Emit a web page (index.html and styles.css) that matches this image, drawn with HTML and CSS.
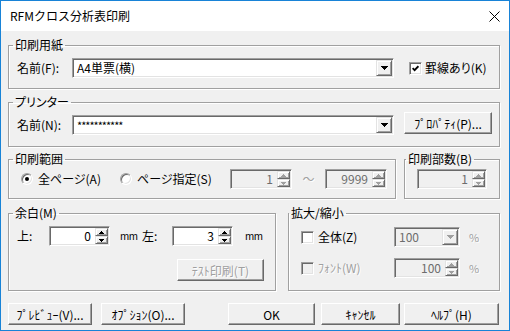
FILE: index.html
```html
<!DOCTYPE html>
<html lang="ja">
<head>
	<meta charset="UTF-8">
	<title>RFMクロス分析表印刷</title>
	<link rel="stylesheet" href="styles.css">
</head>
<body>
	<div class="window">
		<div class="titlebar">
			<span class="title">RFMクロス分析表印刷</span>
			<svg class="close" width="11" height="11" viewBox="0 0 11 11"><path d="M0.5 0.5 L10.5 10.5 M10.5 0.5 L0.5 10.5" stroke="#000" stroke-width="1"/></svg>
		</div>

		<div class="client">
			<!-- paper -->
			<fieldset class="group paper">
				<legend>印刷用紙</legend>
				<div class="row">
					<span class="lbl">名前(F):</span>
					<div class="combo name-combo">
						<span class="combo-text">A4単票(横)</span>
						<span class="drop"><svg width="7" height="4" shape-rendering="crispEdges"><polygon points="0,0 7,0 3.5,4" fill="#000"/></svg></span>
					</div>
					<span class="check rule-check"><svg width="7" height="7" viewBox="0 0 7 7"><path d="M0.6 3.2 L2.6 5.2 L6.4 1.2" stroke="#000" stroke-width="1.8" fill="none"/></svg></span>
					<span class="check-text">罫線あり(K)</span>
				</div>
			</fieldset>

			<!-- printer -->
			<fieldset class="group printer">
				<legend>プリンター</legend>
				<div class="row">
					<span class="lbl">名前(N):</span>
					<div class="combo name-combo">
						<span class="combo-text stars">***********</span>
						<span class="drop"><svg width="7" height="4" shape-rendering="crispEdges"><polygon points="0,0 7,0 3.5,4" fill="#000"/></svg></span>
					</div>
					<button class="btn prop-btn">ﾌﾟﾛﾊﾟﾃｨ(P)...</button>
				</div>
			</fieldset>

			<div class="group-row range-row">
				<fieldset class="group range">
					<legend>印刷範囲</legend>
					<div class="row range-line">
						<span class="opt opt-all"><span class="radio on"></span><span>全ページ(A)</span></span>
						<span class="opt opt-page"><span class="radio"></span><span>ページ指定(S)</span></span>
						<div class="spin page-spin off">
							<span class="spin-text">1</span>
							<span class="updown">
								<span class="ud-btn"><svg width="5" height="3" shape-rendering="crispEdges"><polygon points="0,3 5,3 2.5,0" fill="#a0a0a0"/></svg></span>
								<span class="ud-btn"><svg width="5" height="3" shape-rendering="crispEdges"><polygon points="0,0 5,0 2.5,3" fill="#a0a0a0"/></svg></span>
							</span>
						</div>
						<span class="tilde dis">～</span>
						<div class="spin page-spin off">
							<span class="spin-text">9999</span>
							<span class="updown">
								<span class="ud-btn"><svg width="5" height="3" shape-rendering="crispEdges"><polygon points="0,3 5,3 2.5,0" fill="#a0a0a0"/></svg></span>
								<span class="ud-btn"><svg width="5" height="3" shape-rendering="crispEdges"><polygon points="0,0 5,0 2.5,3" fill="#a0a0a0"/></svg></span>
							</span>
						</div>
					</div>
				</fieldset>

				<fieldset class="group copies">
					<legend>印刷部数(B)</legend>
					<div class="row">
						<div class="spin copies-spin off">
							<span class="spin-text">1</span>
							<span class="updown">
								<span class="ud-btn"><svg width="5" height="3" shape-rendering="crispEdges"><polygon points="0,3 5,3 2.5,0" fill="#a0a0a0"/></svg></span>
								<span class="ud-btn"><svg width="5" height="3" shape-rendering="crispEdges"><polygon points="0,0 5,0 2.5,3" fill="#a0a0a0"/></svg></span>
							</span>
						</div>
					</div>
				</fieldset>
			</div>

			<div class="group-row margin-row">
				<fieldset class="group margins">
					<legend>余白(M)</legend>
					<div class="row">
						<span class="lbl top-lbl">上:</span>
						<div class="spin margin-spin">
							<span class="spin-text">0</span>
							<span class="updown">
								<span class="ud-btn"><svg width="5" height="3" shape-rendering="crispEdges"><polygon points="0,3 5,3 2.5,0" fill="#000"/></svg></span>
								<span class="ud-btn"><svg width="5" height="3" shape-rendering="crispEdges"><polygon points="0,0 5,0 2.5,3" fill="#000"/></svg></span>
							</span>
						</div>
						<span class="unit">mm</span>
						<span class="lbl left-lbl">左:</span>
						<div class="spin margin-spin">
							<span class="spin-text">3</span>
							<span class="updown">
								<span class="ud-btn"><svg width="5" height="3" shape-rendering="crispEdges"><polygon points="0,3 5,3 2.5,0" fill="#000"/></svg></span>
								<span class="ud-btn"><svg width="5" height="3" shape-rendering="crispEdges"><polygon points="0,0 5,0 2.5,3" fill="#000"/></svg></span>
							</span>
						</div>
						<span class="unit unit-left">mm</span>
					</div>
					<div class="row test-line">
						<button class="btn test-btn dis">ﾃｽﾄ印刷(T)</button>
					</div>
				</fieldset>

				<fieldset class="group zoom">
					<legend>拡大/縮小</legend>
					<div class="row zoom-line">
						<span class="opt zoom-opt"><span class="check"></span><span>全体(Z)</span></span>
						<div class="combo zoom-combo off">
							<span class="combo-text">100</span>
							<span class="drop"><svg width="7" height="4" shape-rendering="crispEdges"><polygon points="0,0 7,0 3.5,4" fill="#a0a0a0"/></svg></span>
						</div>
						<span class="pct dis">%</span>
					</div>
					<div class="row zoom-line second">
						<span class="opt zoom-opt"><span class="check off"></span><span class="dis">ﾌｫﾝﾄ(W)</span></span>
						<div class="spin zoom-spin off">
							<span class="spin-text">100</span>
							<span class="updown">
								<span class="ud-btn"><svg width="5" height="3" shape-rendering="crispEdges"><polygon points="0,3 5,3 2.5,0" fill="#a0a0a0"/></svg></span>
								<span class="ud-btn"><svg width="5" height="3" shape-rendering="crispEdges"><polygon points="0,0 5,0 2.5,3" fill="#a0a0a0"/></svg></span>
							</span>
						</div>
						<span class="pct dis">%</span>
					</div>
				</fieldset>
			</div>

			<div class="buttons">
				<button class="btn b-preview">ﾌﾟﾚﾋﾞｭｰ(V)...</button>
				<button class="btn b-option">ｵﾌﾟｼｮﾝ(O)...</button>
				<button class="btn b-ok">OK</button>
				<button class="btn b-cancel">ｷｬﾝｾﾙ</button>
				<button class="btn b-help">ﾍﾙﾌﾟ(H)</button>
			</div>
		</div>
	</div>
</body>
</html>
```

FILE: styles.css
```css
* {
	box-sizing: border-box;
}

html, body {
	margin: 0;
	padding: 0;
}

body {
	font-family: "Noto Sans CJK JP", "Noto Sans", sans-serif;
	font-size: 12px;
	color: #000;
	background: #fff;
	font-feature-settings: "palt";
}

.window {
	width: 510px;
	height: 331px;
	border: 1px solid #1883d7;
	background: #f0f0f0;
	display: flex;
	flex-direction: column;
}

.titlebar {
	height: 30px;
	background: #fff;
	display: flex;
	align-items: center;
	padding: 0 9px;
}

.title {
	flex: 1;
	line-height: 14px;
	font-feature-settings: normal;
}

.client {
	padding: 7px 9px 0 7px;
}

/* group boxes */
.group {
	margin: 0;
	padding: 6px 8px 10px 8px;
	border: 1px solid #a0a0a0;
	box-shadow: inset 1px 1px 0 #fff, 1px 1px 0 #fff;
	min-width: 0;
}

.group legend {
	padding: 0 2px;
	margin-left: -4px;
	line-height: 14px;
}

.printer {
	margin-top: 6px;
	padding-bottom: 11px;
}

.group-row {
	display: flex;
}

.range-row {
	margin-top: 5px;
	gap: 8px;
}

.range, .copies {
	padding-top: 3px;
	padding-bottom: 9px;
}

.range {
	width: 388px;
}

.copies {
	width: 96px;
}

.copies legend {
	margin-left: -7px;
}

.margin-row {
	margin-top: 7px;
	gap: 12px;
}

.margins {
	width: 268px;
	padding-bottom: 9px;
}

.zoom {
	width: 212px;
	padding-top: 7px;
	padding-bottom: 12px;
}

.zoom legend {
	margin-left: -8px;
}

.row {
	display: flex;
	align-items: center;
	height: 20px;
	line-height: 14px;
	white-space: nowrap;
}

.lbl {
	width: 55px;
	flex: none;
}

/* sunken boxes */
.combo, .spin {
	display: flex;
	height: 20px;
	padding: 1px;
	background: #fff;
	border: 1px solid;
	border-color: #a0a0a0 #fff #fff #a0a0a0;
	box-shadow: inset 1px 1px 0 #696969, inset -1px -1px 0 #e3e3e3;
	flex: none;
}

.combo.off, .spin.off {
	background: #f0f0f0;
	color: #6d6d6d;
}

.combo-text {
	flex: 1;
	padding-left: 3px;
	line-height: 16px;
}

.stars {
	letter-spacing: -1px;
	font-size: 11px;
}

.drop, .ud-btn {
	display: flex;
	align-items: center;
	justify-content: center;
	background: #f0f0f0;
	border: 1px solid;
	border-color: #e3e3e3 #696969 #696969 #e3e3e3;
	box-shadow: inset 1px 1px 0 #fff, inset -1px -1px 0 #a0a0a0;
}

.drop {
	width: 16px;
}

.drop svg, .ud-btn svg {
	display: block;
}

.spin-text {
	flex: 1;
	text-align: right;
	padding-right: 4px;
	line-height: 16px;
}

.updown {
	width: 13px;
	display: flex;
	flex-direction: column;
}

.ud-btn {
	flex: 1;
}

.name-combo {
	width: 322px;
}

/* check boxes and radios */
.check {
	width: 13px;
	height: 13px;
	flex: none;
	display: flex;
	align-items: center;
	justify-content: center;
	background: #fff;
	border: 1px solid;
	border-color: #a0a0a0 #fff #fff #a0a0a0;
	box-shadow: inset 1px 1px 0 #696969, inset -1px -1px 0 #e3e3e3;
}

.check.off {
	background: #f0f0f0;
}

.rule-check {
	margin-left: 15px;
}

.check-text {
	margin-left: 3px;
}

.radio {
	width: 12px;
	height: 12px;
	flex: none;
	border-radius: 50%;
	background: #fff;
	border: 1px solid;
	border-color: #a0a0a0 #fff #fff #a0a0a0;
	box-shadow: inset 1px 1px 0 #696969, inset -1px -1px 0 #e3e3e3;
	display: flex;
	align-items: center;
	justify-content: center;
}

.radio.on::after {
	content: "";
	width: 4px;
	height: 4px;
	border-radius: 50%;
	background: #000;
}

.opt {
	display: flex;
	align-items: center;
	gap: 5px;
	flex: none;
}

.range-line {
	margin-left: 4px;
}

.opt-all {
	width: 99px;
}

.opt-page {
	width: 110px;
}

.page-spin {
	width: 62px;
}

.tilde {
	width: 33px;
	text-align: center;
}

.copies .row {
	margin-left: 4px;
}

.copies-spin {
	width: 70px;
}

/* margins */
.top-lbl {
	width: 32px;
}

.margin-spin {
	width: 61px;
}

.unit {
	font-size: 10px;
	letter-spacing: -0.5px;
	margin-left: 10px;
	width: 27px;
}

.unit-left {
	margin-left: 12px;
}

.left-lbl {
	width: 30px;
}

.test-line {
	margin-top: 13px;
	height: 22px;
}

.test-btn {
	margin-left: 160px;
	width: 87px;
}

/* zoom */
.zoom-line {
	margin-left: 4px;
}

.zoom-line.second {
	margin-top: 11px;
}

.zoom-opt {
	width: 93px;
	gap: 4px;
}

.zoom-combo, .zoom-spin {
	width: 66px;
}

.pct {
	margin-left: 9px;
	font-size: 11px;
}

.dis {
	color: #a0a0a0;
	text-shadow: 1px 1px 0 #fff;
}

/* push buttons */
.btn {
	height: 22px;
	padding: 0;
	font-family: inherit;
	font-size: 12px;
	color: #000;
	background: #f0f0f0;
	border: 1px solid;
	border-color: #fff #696969 #696969 #fff;
	box-shadow: inset -1px -1px 0 #a0a0a0;
	border-radius: 0;
	flex: none;
}

.btn.dis {
	color: #a0a0a0;
}

.prop-btn {
	margin-left: 10px;
	width: 88px;
	align-self: flex-start;
	margin-top: -3px;
}

.buttons {
	display: flex;
	margin-top: 12px;
}

.b-preview {
	width: 84px;
}

.b-option {
	margin-left: 9px;
	width: 84px;
}

.b-ok {
	margin-left: 43px;
	width: 87px;
}

.b-cancel {
	margin-left: 6px;
	width: 79px;
}

.b-help {
	margin-left: 4px;
	width: 95px;
}
```
